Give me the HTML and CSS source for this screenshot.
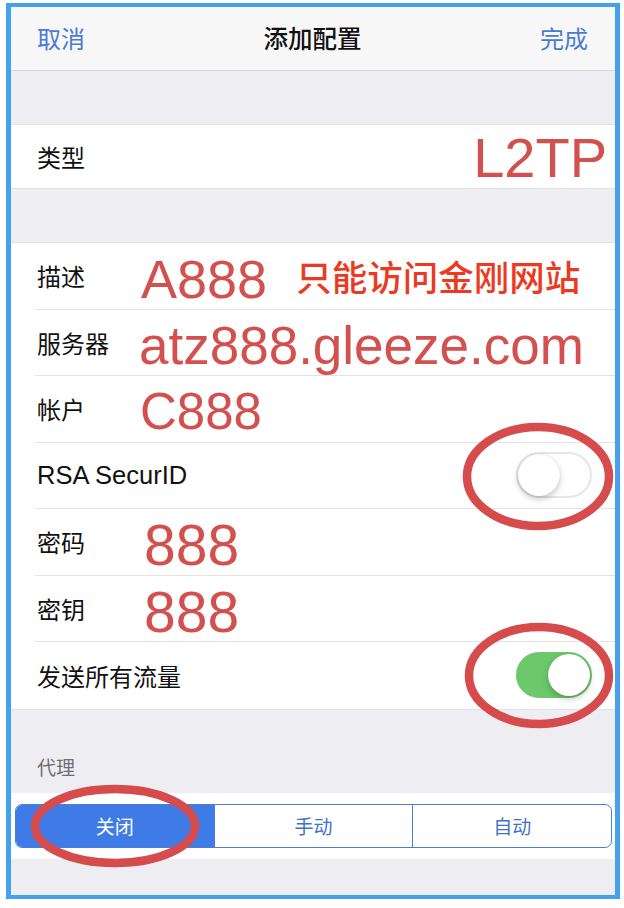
FILE: index.html
```html
<!DOCTYPE html>
<html lang="zh-CN">
<head>
<meta charset="utf-8">
<title>添加配置</title>
<link rel="stylesheet" href="styles.css">
</head>
<body>
<div class="frame">
  <header class="nav">
    <span class="nav-btn">取消</span>
    <span class="nav-title">添加配置</span>
    <span class="nav-btn">完成</span>
  </header>

  <div class="gap"></div>
  <section class="group">
    <div class="row row-type">
      <span class="label">类型</span>
      <span class="val val-type">L2TP</span>
    </div>
  </section>

  <div class="gap"></div>
  <section class="group">
    <div class="row">
      <span class="label">描述</span>
      <span class="val val-a">A888</span>
      <span class="note">只能访问金刚网站</span>
    </div>
    <div class="row">
      <span class="label">服务器</span>
      <span class="val">atz888.gleeze.com</span>
    </div>
    <div class="row">
      <span class="label">帐户</span>
      <span class="val val-c">C888</span>
    </div>
    <div class="row">
      <span class="label label-latin">RSA SecurID</span>
      <span class="switch"><span class="knob"></span></span>
    </div>
    <div class="row">
      <span class="label">密码</span>
      <span class="val val-big">888</span>
    </div>
    <div class="row">
      <span class="label">密钥</span>
      <span class="val val-big">888</span>
    </div>
    <div class="row row-last">
      <span class="label">发送所有流量</span>
      <span class="switch on"><span class="knob"></span></span>
    </div>
  </section>

  <div class="section-head">代理</div>
  <section class="seg-band">
    <div class="seg">
      <span class="seg-item active">关闭</span>
      <span class="seg-item">手动</span>
      <span class="seg-item">自动</span>
    </div>
  </section>
  <div class="tail"></div>
</div>

<svg class="marks" width="624" height="908" viewBox="0 0 624 908">
  <ellipse cx="538" cy="476.5" rx="71" ry="49.5" />
  <ellipse cx="539" cy="675.5" rx="70" ry="48.5" />
  <ellipse cx="115" cy="826" rx="80" ry="37" />
</svg>
</body>
</html>
```

FILE: styles.css
```css
* { box-sizing: border-box; }
html, body { margin: 0; padding: 0; background: #ffffff; }
body {
  width: 624px;
  height: 908px;
  position: relative;
  font-family: "Liberation Sans", "Noto Sans CJK SC", sans-serif;
  overflow: hidden;
}

.frame {
  margin: 3px 4px 0 6px;
  width: 614px;
  height: 896px;
  border-style: solid;
  border-color: #44a1ea;
  border-width: 4px 5px;
  background: #eeeef2;
  display: flex;
  flex-direction: column;
}

.nav {
  height: 64px;
  flex: none;
  background: #f7f7f8;
  border-bottom: 1px solid #d9d9dc;
  display: flex;
  align-items: center;
  justify-content: space-between;
  padding: 0 27px 2px 26px;
}
.nav-btn {
  font-family: "Noto Sans CJK SC", sans-serif;
  font-size: 24px;
  color: #4a7bd2;
}
.nav-title {
  font-family: "Noto Sans CJK SC", sans-serif;
  font-size: 24.5px;
  font-weight: 500;
  color: #111111;
}

.gap { height: 53px; flex: none; }

.group {
  background: #ffffff;
  flex: none;
  border-top: 1px solid #e2e2e5;
  border-bottom: 1px solid #e2e2e5;
}

.row {
  height: 66.5px;
  margin-left: 24px;
  padding-right: 23px;
  display: flex;
  align-items: center;
  border-bottom: 1px solid #e3e3e6;
  position: relative;
}
.row-last { border-bottom: none; }
.row-type { height: 63px; border-bottom: none; padding-right: 8px; }

.label {
  width: 104px;
  flex: none;
  padding-left: 2px;
  font-family: "Noto Sans CJK SC", sans-serif;
  font-size: 24px;
  color: #111111;
  white-space: nowrap;
}
.label-latin {
  font-family: "Liberation Sans", sans-serif;
  font-size: 25.5px;
}

.val {
  font-family: "Liberation Sans", sans-serif;
  font-size: 53px;
  line-height: 1;
  color: #d2514f;
  padding-top: 6px;
  white-space: nowrap;
}
.val-a { font-size: 54px; margin-left: 2px; }
.val-type {
  margin-left: auto;
  font-size: 56px;
  padding-top: 2px;
}
.val-c { font-size: 51px; margin-left: 1px; }
.val-big { font-size: 57px; margin-left: 5px; padding-top: 8px; }

.note {
  margin-left: 29px;
  font-family: "Noto Sans CJK SC", sans-serif;
  font-size: 35.5px;
  font-weight: 500;
  line-height: 1;
  color: #ec3a22;
  white-space: nowrap;
}

.switch {
  margin-left: auto;
  width: 76px;
  height: 46px;
  border-radius: 23px;
  background: #ffffff;
  border: 2px solid #e6e6e6;
  position: relative;
  flex: none;
}
.switch .knob {
  position: absolute;
  top: 0;
  left: 0;
  width: 42px;
  height: 42px;
  border-radius: 50%;
  background: #ffffff;
  box-shadow: 0 3px 6px rgba(0, 0, 0, 0.22), 0 0 1px rgba(0, 0, 0, 0.2);
}
.switch.on {
  background: #6cc86a;
  border-color: #6cc86a;
}
.switch.on .knob { left: auto; right: 0; }

.section-head {
  flex: none;
  height: 83px;
  padding: 43px 0 0 26px;
  font-family: "Noto Sans CJK SC", sans-serif;
  font-size: 19px;
  color: #6d6d72;
}

.seg-band {
  flex: none;
  height: 66px;
  background: #ffffff;
  padding: 11px 3px 11px 4px;
}
.seg {
  height: 44px;
  display: flex;
  border: 1.5px solid #4b7fd4;
  border-radius: 7px;
  overflow: hidden;
}
.seg-item {
  flex: 1;
  display: flex;
  align-items: center;
  justify-content: center;
  font-family: "Noto Sans CJK SC", sans-serif;
  font-size: 19px;
  color: #3f72c9;
  border-left: 1.5px solid #4b7fd4;
}
.seg-item:first-child { border-left: none; }
.seg-item.active {
  background: #3f7be6;
  color: #ffffff;
}

.tail { flex: 1; }

.marks {
  position: absolute;
  top: 0;
  left: 0;
  pointer-events: none;
}
.marks ellipse {
  fill: none;
  stroke: #d64b4b;
  stroke-width: 8.5;
}
```
